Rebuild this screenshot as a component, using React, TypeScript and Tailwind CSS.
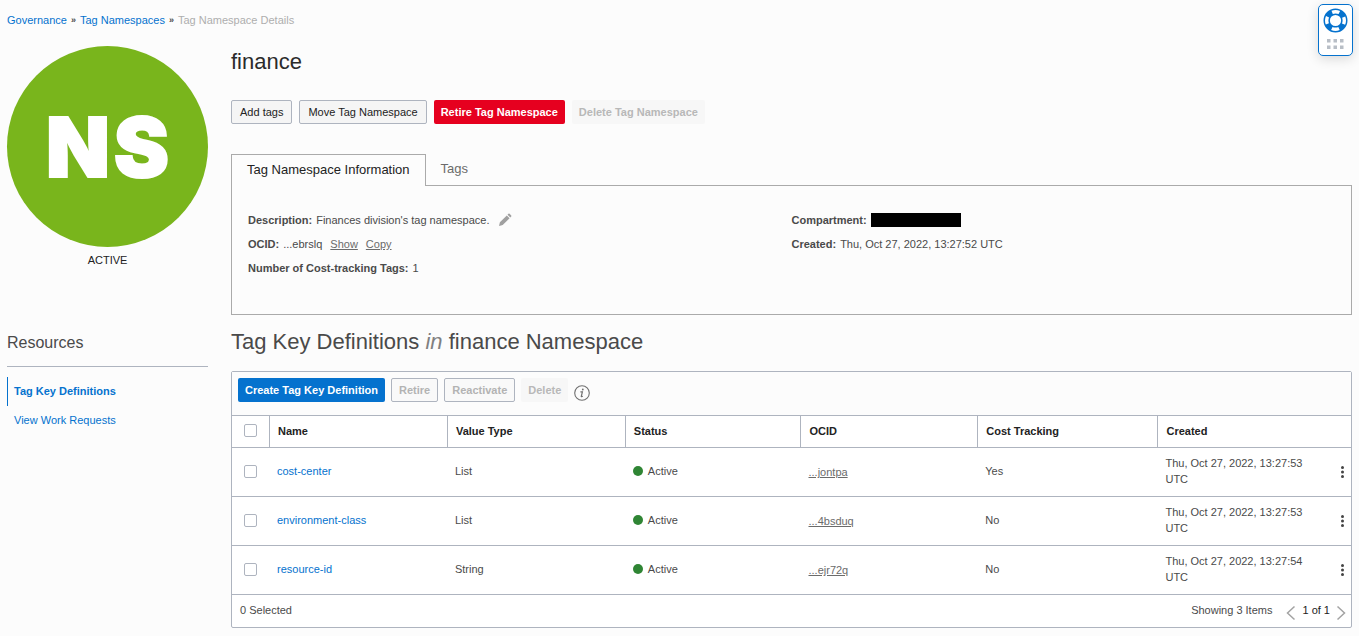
import React from 'react';

type Row = { name: string; type: string; ocid: string; cost: string; created: string };

const rows: Row[] = [
  { name: 'cost-center', type: 'List', ocid: '...jontpa', cost: 'Yes', created: 'Thu, Oct 27, 2022, 13:27:53 UTC' },
  { name: 'environment-class', type: 'List', ocid: '...4bsduq', cost: 'No', created: 'Thu, Oct 27, 2022, 13:27:53 UTC' },
  { name: 'resource-id', type: 'String', ocid: '...ejr72q', cost: 'No', created: 'Thu, Oct 27, 2022, 13:27:54 UTC' },
];

const headings = ['Name', 'Value Type', 'Status', 'OCID', 'Cost Tracking', 'Created'];

const buttonStyles = {
  plain: 'border border-[#aeb4bf] bg-[#f5f5f5] px-2 text-[#222222]',
  danger: 'bg-[#e6001f] px-[7px] font-bold text-white',
  primary: 'bg-[#0572ce] px-[7px] font-bold text-white',
  muted: 'border border-[#aeb4bf] bg-[#f9f9f9] px-[7px] font-bold text-[#b3b3b3]',
  ghost: 'bg-[#f7f7f7] px-[7px] font-bold text-[#b8b8b8]',
};

function Button({ kind, children }: { kind: keyof typeof buttonStyles; children: React.ReactNode }) {
  return (
    <button
      type="button"
      disabled={kind === 'muted' || kind === 'ghost'}
      className={`h-6 rounded-xs whitespace-nowrap ${buttonStyles[kind]}`}
    >
      {children}
    </button>
  );
}

function Checkbox({ label }: { label: string }) {
  return (
    <input
      type="checkbox"
      aria-label={label}
      className="block size-[13px] appearance-none rounded-xs border border-[#aeb4bf] bg-white checked:bg-[#0572ce]"
    />
  );
}

function Chevron({ direction }: { direction: 'left' | 'right' }) {
  return (
    <svg width="10" height="16" viewBox="0 0 10 16" fill="none" stroke="#a3a3a3" strokeWidth="1.5" aria-hidden="true">
      <path d={direction === 'left' ? 'M8.5 1.5 L1.5 8 L8.5 14.5' : 'M1.5 1.5 L8.5 8 L1.5 14.5'} />
    </svg>
  );
}

function Field({ label, children }: { label: string; children?: React.ReactNode }) {
  return (
    <div className="flex h-6 items-center gap-1">
      <dt className="font-bold">{label}</dt>
      <dd className="flex items-center">{children}</dd>
    </div>
  );
}

function HelpWidget() {
  return (
    <button
      type="button"
      aria-label="Help"
      className="absolute top-1 right-[6px] flex h-[52px] w-[35px] flex-col items-center gap-[6px] rounded-[5px] border border-[#0572ce] bg-white pt-[3px] shadow-[0_3px_12px_rgba(0,0,0,0.14)]"
    >
      <svg width="25" height="25" viewBox="0 0 25 25" fill="none" aria-hidden="true">
        <circle cx="12.5" cy="12.5" r="8.8" stroke="#0572ce" strokeWidth="6.4" />
        <circle
          cx="12.5"
          cy="12.5"
          r="8.8"
          stroke="#ffffff"
          strokeWidth="3.4"
          strokeDasharray="7.4 6.423"
          strokeDashoffset="3.7"
        />
      </svg>
      <svg width="17" height="10" viewBox="0 0 17 10" fill="#b8bec6" aria-hidden="true">
        <path d="M0 0h3.5v3.5H0zM6.5 0h3.5v3.5H6.5zM13 0h3.5v3.5H13zM0 6.5h3.5V10H0zM6.5 6.5h3.5V10H6.5zM13 6.5h3.5V10H13z" />
      </svg>
    </button>
  );
}

export default function App() {
  return (
    <div className="relative min-h-screen bg-[#fcfcfc] px-[7px] pb-2 font-['Liberation_Sans',Arial,sans-serif] text-[11px] leading-4 text-[#4a4a4a]">
      <nav aria-label="Breadcrumb" className="flex h-[46px] items-start pt-3">
        <a href="#governance" className="text-[#0572ce]">Governance</a>
        <span className="mx-1 text-[9px] font-bold">»</span>
        <a href="#namespaces" className="text-[#0572ce]">Tag Namespaces</a>
        <span className="mx-1 text-[9px] font-bold">»</span>
        <span className="text-[#aeaeae]">Tag Namespace Details</span>
      </nav>
      <HelpWidget />

      <div className="flex items-start gap-[23px]">
        <aside className="w-[201px] shrink-0">
          <div className="flex aspect-square items-center justify-center gap-1 rounded-full bg-[#79b51c] font-['Inter',sans-serif] text-[83px] font-black text-white [-webkit-text-stroke:2px_white]">
            <span>N</span>
            <span>S</span>
          </div>
          <p className="mt-[5px] text-center text-[#222222]">ACTIVE</p>
          <h2 className="mt-[63px] border-b border-[#aeb4bf] pb-[11px] text-[16px] leading-6">Resources</h2>
          <ul className="mt-[10px] text-[#0572ce]">
            <li>
              <a href="#definitions" className="flex h-[29px] items-center border-l border-[#0572ce] pb-[2px] pl-[6px] font-bold">
                Tag Key Definitions
              </a>
            </li>
            <li>
              <a href="#requests" className="flex h-[29px] items-center pb-[2px] pl-[7px]">View Work Requests</a>
            </li>
          </ul>
        </aside>

        <main className="min-w-0 flex-1">
          <h1 className="text-[22px] leading-8 text-[#2b2b2b]">finance</h1>
          <div className="mt-[22px] flex gap-[7px]">
            <Button kind="plain">Add tags</Button>
            <Button kind="plain">Move Tag Namespace</Button>
            <Button kind="danger">Retire Tag Namespace</Button>
            <Button kind="ghost">Delete Tag Namespace</Button>
          </div>

          <div role="tablist" className="mt-[30px] flex text-[13px]">
            <button
              type="button"
              role="tab"
              aria-selected="true"
              className="z-10 -mb-px h-8 border border-b-0 border-[#aaaaaa] bg-[#fcfcfc] px-[15px] pb-[2px] text-[#222222]"
            >
              Tag Namespace Information
            </button>
            <button type="button" role="tab" aria-selected="false" className="h-[30px] px-[15px] text-[#6b6b6b]">
              Tags
            </button>
          </div>
          <section className="grid min-h-[130px] grid-cols-2 border border-[#aaaaaa] px-4 pt-[22px] pb-[30px]">
            <dl>
              <Field label="Description:">
                Finances division's tag namespace.
                <button type="button" aria-label="Edit description" className="ml-2">
                  <svg width="14" height="14" viewBox="0 0 14 14" fill="#a0a0a0" aria-hidden="true">
                    <path d="M1 13l.9-3.7L8.8 2.4l2.8 2.8-6.9 6.9zM9.5 1.7l.9-.9q.6-.5 1.2 0l1.6 1.6q.5.6 0 1.2l-.9.9z" />
                  </svg>
                </button>
              </Field>
              <Field label="OCID:">
                ...ebrslq
                <button type="button" className="ml-2 underline text-[#6b6b6b]">Show</button>
                <button type="button" className="ml-2 underline text-[#6b6b6b]">Copy</button>
              </Field>
              <Field label="Number of Cost-tracking Tags:">1</Field>
            </dl>
            <dl>
              <Field label="Compartment:">
                <span className="h-[14px] w-[90px] bg-black" />
              </Field>
              <Field label="Created:">Thu, Oct 27, 2022, 13:27:52 UTC</Field>
            </dl>
          </section>

          <h2 className="mt-[11px] text-[22px] leading-8">
            Tag Key Definitions <i className="text-[#808080]">in</i> finance Namespace
          </h2>

          <section className="mt-[13px] rounded-xs border border-[#aeb4bf] bg-white">
            <div className="flex h-[43px] items-start gap-[6px] bg-[#fcfcfc] px-[6px] pt-[6px]">
              <Button kind="primary">Create Tag Key Definition</Button>
              <Button kind="muted">Retire</Button>
              <Button kind="muted">Reactivate</Button>
              <Button kind="ghost">Delete</Button>
              <button type="button" aria-label="Information" className="mt-[7px]">
                <svg width="16" height="16" viewBox="0 0 16 16" fill="none" stroke="#707070" aria-hidden="true">
                  <circle cx="8" cy="8" r="7.3" strokeWidth="1.1" />
                  <path d="M6.4 6.8h2L7.3 11.4q0 .6 1.5-.1" strokeWidth="1.2" />
                  <circle cx="8.8" cy="4.5" r=".9" fill="#707070" stroke="none" />
                </svg>
              </button>
            </div>
            <table className="w-full table-fixed border-separate border-spacing-0 text-left">
              <colgroup>
                <col className="w-[37px]" />
                <col className="w-[15.9%]" />
                <col className="w-[15.9%]" />
                <col className="w-[15.7%]" />
                <col className="w-[15.8%]" />
                <col className="w-[16.1%]" />
                <col />
                <col className="w-8" />
              </colgroup>
              <thead className="text-[#222222]">
                <tr className="*:h-[33px] *:border-y *:border-[#aeb4bf] *:pb-[2px]">
                  <th className="pl-3"><Checkbox label="Select all" /></th>
                  {headings.map((heading) => (
                    <th key={heading} className="border-l px-2">{heading}</th>
                  ))}
                  <th aria-label="Actions" />
                </tr>
              </thead>
              <tbody>
                {rows.map((row) => (
                  <tr key={row.name} className="*:h-[49px] *:border-b *:border-[#aeb4bf] *:px-2 *:pb-[2px]">
                    <td><div className="pl-1"><Checkbox label={`Select ${row.name}`} /></div></td>
                    <td><a href={`#${row.name}`} className="text-[#0572ce]">{row.name}</a></td>
                    <td>{row.type}</td>
                    <td>
                      <span className="flex items-center gap-[5px]">
                        <span className="size-[10px] rounded-full bg-[#2f8534]" />
                        Active
                      </span>
                    </td>
                    <td><button type="button" className="pt-[2px] text-[#6b6b6b] underline">{row.ocid}</button></td>
                    <td>{row.cost}</td>
                    <td>{row.created}</td>
                    <td>
                      <button type="button" aria-label={`Actions for ${row.name}`} className="mt-[2px] -mr-px ml-auto block">
                        <svg width="3" height="12" viewBox="0 0 3 12" fill="#444444" aria-hidden="true">
                          <circle cx="1.5" cy="1.5" r="1.5" />
                          <circle cx="1.5" cy="6" r="1.5" />
                          <circle cx="1.5" cy="10.5" r="1.5" />
                        </svg>
                      </button>
                    </td>
                  </tr>
                ))}
              </tbody>
            </table>
            <footer className="flex h-8 items-center pr-[5px] pb-[2px] pl-2">
              <span>0 Selected</span>
              <span className="ml-auto">Showing 3 Items</span>
              <button type="button" aria-label="Previous page" className="mt-[5px] ml-[14px]"><Chevron direction="left" /></button>
              <span className="mx-[6px] text-[#222222]">1 of 1</span>
              <button type="button" aria-label="Next page" className="mt-[5px]"><Chevron direction="right" /></button>
            </footer>
          </section>
        </main>
      </div>
    </div>
  );
}
